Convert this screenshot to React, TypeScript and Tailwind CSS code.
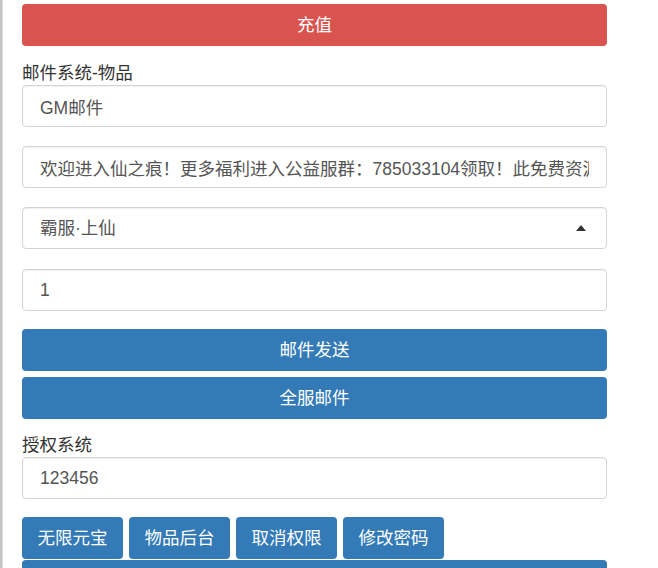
import React from "react";

const font = { fontFamily: '"Liberation Sans", "Noto Sans CJK SC", sans-serif' };

const inputCls =
  "block w-full h-[42px] rounded-[4px] border border-[#d4d4d4] bg-white px-[17px] text-[17.5px] text-[#555] shadow-[inset_0_1px_1px_rgba(0,0,0,0.06)] outline-none";

function TextField({ value, className = "" }: { value: string; className?: string }) {
  return <input readOnly value={value} className={`${inputCls} ${className}`} style={font} />;
}

function BlueButton({ label, className = "" }: { label: string; className?: string }) {
  return (
    <button
      className={`block w-full h-[42px] rounded-[4px] bg-[#337ab7] text-[17.5px] text-white ${className}`}
      style={font}
    >
      {label}
    </button>
  );
}

export default function App() {
  const tabs = ["无限元宝", "物品后台", "取消权限", "修改密码"];
  return (
    <div className="flex h-[568px] w-[658px] overflow-hidden bg-white" style={font}>
      <div className="w-[3px] shrink-0 bg-[#c4c4c4] border-r border-[#dedede]" />
      <div className="w-[585px] shrink-0 ml-[19px] pt-[4px]">
        <button
          className="block w-full h-[42px] rounded-[4px] bg-[#d9534f] text-[17.5px] text-white"
          style={font}
        >
          充值
        </button>

        <div className="mt-[15px] h-[24px] text-[17.5px] leading-[24px] text-[#333]">邮件系统-物品</div>
        <TextField value="GM邮件" />

        <TextField
          className="mt-[19px]"
          value="欢迎进入仙之痕！更多福利进入公益服群：785033104领取！此免费资源仅供学习交流"
        />

        <div className={`${inputCls} mt-[19px] flex items-center justify-between pr-[20px]`}>
          <span>霸服·上仙</span>
          <svg width="10" height="6" viewBox="0 0 10 6" aria-hidden="true">
            <path d="M0 6 L5 0 L10 6 Z" fill="#333" />
          </svg>
        </div>

        <TextField className="mt-[20px]" value="1" />

        <BlueButton label="邮件发送" className="mt-[18px]" />
        <BlueButton label="全服邮件" className="mt-[6px]" />

        <div className="mt-[15px] h-[23px] text-[17.5px] leading-[23px] text-[#333]">授权系统</div>
        <TextField value="123456" />

        <div className="mt-[18px] flex gap-[6px]">
          {tabs.map((t) => (
            <button
              key={t}
              className="h-[42px] w-[101px] rounded-[4px] bg-[#337ab7] text-[17.5px] text-white"
              style={font}
            >
              {t}
            </button>
          ))}
        </div>
        <div className="mt-[1px] h-[40px] w-full rounded-t-[4px] bg-[#337ab7]" />
      </div>
    </div>
  );
}
